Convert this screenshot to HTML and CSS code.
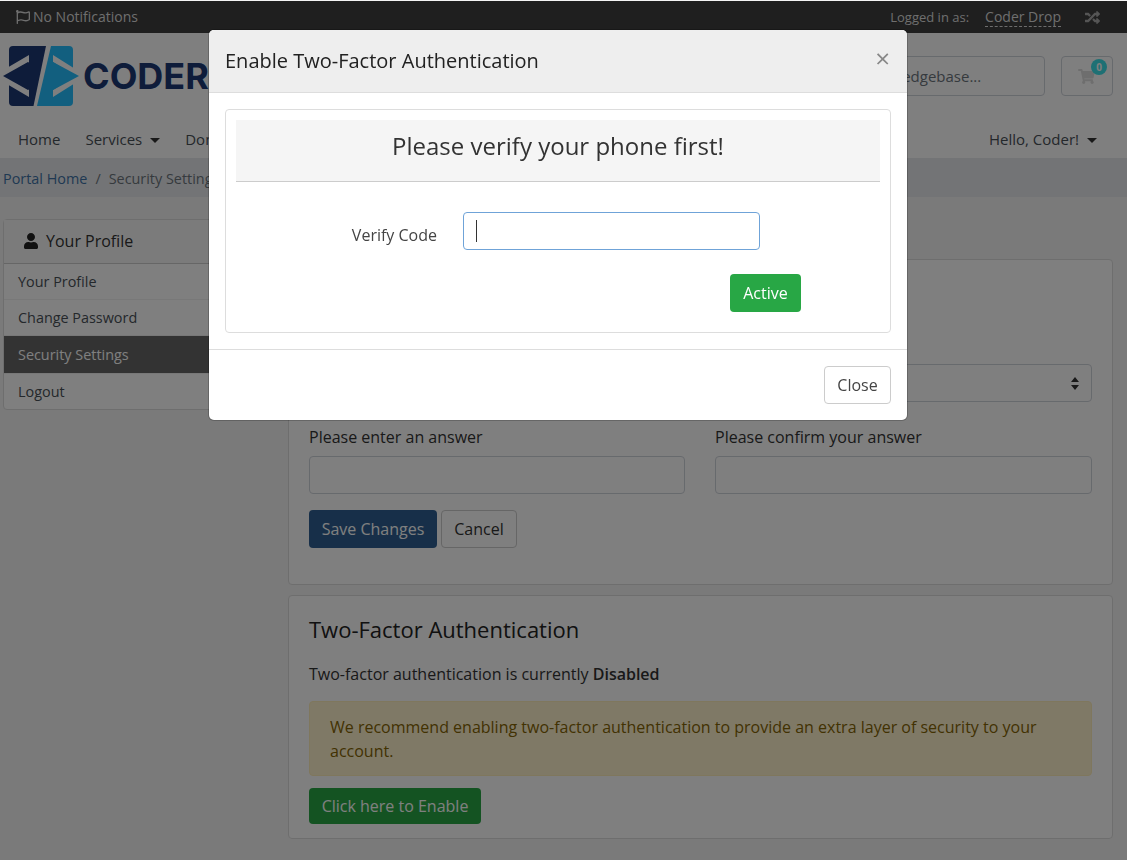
FILE: index.html
```html
<!DOCTYPE html>
<html>
  <head>
    <meta charset="UTF-8" />
    <title>Security Settings</title>
    <link rel="stylesheet" href="styles.css">
  </head>

  <body>
    <div class="top-bar">
      <div class="notifications">
        <svg class="flag-icon" viewBox="0 0 512 512"><path d="M336.174 80c-49.132 0-93.305-32-161.913-32-31.301 0-58.303 6.482-80.721 15.168a48.04 48.04 0 0 0 2.142-20.727C93.067 19.575 74.167 1.594 51.201.104 23.242-1.71 0 20.431 0 48c0 17.764 9.657 33.262 24 41.562V496c0 8.837 7.163 16 16 16h16c8.837 0 16-7.163 16-16v-83.443C109.869 395.28 143.259 384 199.826 384c49.132 0 93.305 32 161.913 32 58.479 0 101.972-22.617 128.548-39.981C503.846 367.161 512 352.051 512 335.855V95.937c0-34.459-35.264-57.768-66.904-44.117C409.193 67.309 371.641 80 336.174 80zM464 336c-21.783 15.412-60.824 32-102.261 32-59.945 0-102.002-32-161.913-32-43.361 0-96.379 9.403-127.826 24V128c21.784-15.412 60.824-32 102.261-32 59.945 0 102.002 32 161.913 32 43.271 0 96.32-17.366 127.826-32v240z"/></svg>
        No Notifications
      </div>
      <div class="account">
        <span class="logged-in">Logged in as:</span>
        <span class="account-name">Coder Drop</span>
        <svg class="shuffle-icon" viewBox="0 0 512 512"><path d="M504.971 359.029c9.373 9.373 9.373 24.569 0 33.941l-80 79.984c-15.01 15.01-40.971 4.49-40.971-16.971V416h-58.785a12.004 12.004 0 0 1-8.773-3.812l-70.556-75.596 53.333-57.143L352 336h32v-39.981c0-21.438 25.943-31.998 40.971-16.971l80 79.981zM12 176h84l52.781 56.551 53.333-57.143-70.556-75.596A11.999 11.999 0 0 0 122.785 96H12c-6.627 0-12 5.373-12 12v56c0 6.627 5.373 12 12 12zm372 0v39.984c0 21.46 25.961 31.98 40.971 16.971l80-79.984c9.373-9.373 9.373-24.569 0-33.941l-80-79.981C409.943 24.021 384 34.582 384 56.019V96h-58.785a12.004 12.004 0 0 0-8.773 3.812L96 336H12c-6.627 0-12 5.373-12 12v56c0 6.627 5.373 12 12 12h110.785c3.326 0 6.503-1.381 8.773-3.812L352 176h32z"/></svg>
      </div>
    </div>

    <div class="site-header">
      <div class="logo">
        <svg class="logo-mark" viewBox="0 0 80 62">
          <path fill="#1d3874" d="M13 1h33L33.500 61H13a4 4 0 0 1-4-4V5a4 4 0 0 1 4-4z" />
          <path fill="#fff" d="M29 10L0 27v8l29 17v-7L5 31l24-14z" />
          <path fill="#1d3874" d="M3 31l25-14v28z" />
          <path fill="#24bfff" d="M51 1h18a4 4 0 0 1 4 4v52a4 4 0 0 1-4 4H37z" />
          <path fill="#fff" d="M53 10l27 17v8L53 52v-7l22-14-22-14z" />
          <path fill="#24bfff" d="M79 31L53 17v28z" />
        </svg>
        <span class="logo-text">CODER</span>
      </div>
      <div class="header-tools">
        <input class="search-input" type="text" placeholder="Search our knowledgebase..." />
        <div class="cart-btn">
          <svg class="cart-icon" viewBox="0 0 576 512"><path d="M528.12 301.319l47.273-208C578.806 78.301 567.391 64 551.99 64H159.208l-9.166-44.81C147.758 8.021 137.93 0 126.529 0H24C10.745 0 0 10.745 0 24v16c0 13.255 10.745 24 24 24h69.883l70.248 343.435C147.325 417.1 136 435.222 136 456c0 30.928 25.072 56 56 56s56-25.072 56-56c0-15.674-6.447-29.835-16.824-40h209.647C430.447 426.165 424 440.326 424 456c0 30.928 25.072 56 56 56s56-25.072 56-56c0-22.172-12.888-41.332-31.579-50.405l5.517-24.276c3.413-15.018-8.002-29.319-23.403-29.319H218.117l-6.545-32h293.145c11.206 0 20.92-7.754 23.403-18.681z"/></svg>
          <span class="cart-badge">0</span>
        </div>
      </div>
    </div>

    <div class="main-nav">
      <div class="nav-left">
        <a class="nav-link">Home</a>
        <a class="nav-link has-caret">Services</a>
        <a class="nav-link has-caret">Domains</a>
      </div>
      <a class="nav-link has-caret">Hello, Coder!</a>
    </div>

    <div class="breadcrumb">
      <a class="crumb-link">Portal Home</a>
      <span class="crumb-sep">/</span>
      <span class="crumb-current">Security Settings</span>
    </div>

    <div class="page-body">
      <div class="side-card">
        <div class="side-title">
          <svg class="user-icon" viewBox="0 0 448 512"><path d="M224 256c70.700 0 128-57.300 128-128S294.700 0 224 0 96 57.300 96 128s57.300 128 128 128zm89.600 32h-16.700c-22.200 10.200-46.900 16-72.900 16s-50.600-5.800-72.900-16h-16.700C60.200 288 0 348.200 0 422.400V464c0 26.500 21.500 48 48 48h352c26.500 0 48-21.500 48-48v-41.600c0-74.200-60.200-134.400-134.400-134.400z"/></svg>
          Your Profile
        </div>
        <a class="side-item">Your Profile</a>
        <a class="side-item">Change Password</a>
        <a class="side-item active">Security Settings</a>
        <a class="side-item">Logout</a>
      </div>

      <div class="content">
        <div class="card question-card">
          <h3 class="card-title">Security Question</h3>
          <div class="form-row select-row">
            <div class="field">
              <label class="field-label">Current answer</label>
              <input class="field-input" type="text" />
            </div>
            <div class="field">
              <label class="field-label">Please choose a question</label>
              <div class="select-wrap">
                <div class="field-input"></div>
                <svg class="select-arrows" viewBox="0 0 8 13"><path d="M4 0l4 5H0zM4 13L0 8h8z"/></svg>
              </div>
            </div>
          </div>
          <div class="form-row">
            <div class="field">
              <label class="field-label">Please enter an answer</label>
              <input class="field-input" type="text" />
            </div>
            <div class="field">
              <label class="field-label">Please confirm your answer</label>
              <input class="field-input" type="text" />
            </div>
          </div>
          <div class="form-actions">
            <button class="btn btn-primary">Save Changes</button>
            <button class="btn btn-outline">Cancel</button>
          </div>
        </div>

        <div class="card twofa-card">
          <h3 class="card-title">Two-Factor Authentication</h3>
          <p class="twofa-status">Two-factor authentication is currently <strong>Disabled</strong></p>
          <div class="alert-warning">We recommend enabling two-factor authentication to provide an extra layer of security to your account.</div>
          <button class="btn btn-success btn-enable">Click here to Enable</button>
        </div>
      </div>
    </div>

    <div class="modal-backdrop">
      <div class="modal">
        <div class="modal-header">
          <span class="modal-title">Enable Two-Factor Authentication</span>
          <span class="modal-close">×</span>
        </div>
        <div class="modal-body">
          <div class="verify-box">
            <div class="verify-heading">Please verify your phone first!</div>
            <div class="verify-row">
              <label class="verify-label">Verify Code</label>
              <div class="verify-field">
                <input class="verify-input" type="text" />
                <span class="text-caret"></span>
              </div>
            </div>
            <div class="verify-actions">
              <button class="btn btn-success btn-active">Active</button>
            </div>
          </div>
        </div>
        <div class="modal-footer">
          <button class="btn btn-close">Close</button>
        </div>
      </div>
    </div>
  </body>
</html>
```

FILE: styles.css
```css
* {
  box-sizing: border-box;
}

body {
  font-family: "Open Sans", sans-serif;
  font-size: 16px;
  line-height: 24px;
  color: #333;
  margin: 0;
  padding-top: 1px;
  background: #f4f4f4;
}

/* Top bar */
.top-bar {
  display: flex;
  justify-content: space-between;
  align-items: center;
  height: 32px;
  padding: 0 27px 0 16px;
  background: #3e3e3e;
  color: #ddd;
  font-size: 14px;
}

.notifications {
  display: flex;
  align-items: center;
  gap: 3px;
}

.flag-icon {
  width: 14px;
  height: 14px;
  fill: #ddd;
}

.account {
  display: flex;
  align-items: center;
}

.logged-in {
  font-size: 13px;
}

.account-name {
  margin-left: 16px;
  line-height: 19px;
  border-bottom: 1px dashed #ddd;
}

.shuffle-icon {
  width: 15px;
  height: 15px;
  margin-left: 24px;
  fill: #aaa;
}

/* Header */
.site-header {
  display: flex;
  justify-content: space-between;
  height: 90px;
  padding: 12px 14px 0 0;
  background: #fff;
}

.logo {
  display: flex;
  align-items: center;
  height: 62px;
}

.logo-mark {
  width: 80px;
  height: 62px;
}

.logo-text {
  margin-left: 3px;
  font-family: "Inter", sans-serif;
  font-size: 36px;
  font-weight: 700;
  color: #1d3874;
  white-space: nowrap;
}

.header-tools {
  display: flex;
  gap: 16px;
  height: 40px;
  margin-top: 11px;
}

.search-input {
  width: 277px;
  padding: 0 12px;
  font-family: inherit;
  font-size: 15px;
  background: #fff;
  border: 1px solid #ced4da;
  border-radius: 4px;
}

.search-input::placeholder {
  color: #6c757d;
}

.cart-btn {
  position: relative;
  display: flex;
  align-items: center;
  justify-content: center;
  width: 52px;
  border: 1px solid #ced4da;
  border-radius: 4px;
}

.cart-icon {
  width: 17px;
  height: 15px;
  margin-top: 1px;
  margin-left: -1px;
  fill: #ddd;
}

.cart-badge {
  position: absolute;
  top: 2px;
  right: 5px;
  width: 16px;
  height: 16px;
  border-radius: 50%;
  background: #3ce0e8;
  color: #fff;
  font-size: 10px;
  font-weight: 700;
  line-height: 16px;
  text-align: center;
}

/* Nav */
.main-nav {
  display: flex;
  justify-content: space-between;
  align-items: center;
  height: 35px;
  padding: 0 30px 3px 18px;
  background: #fff;
  font-size: 15px;
}

.nav-left {
  display: flex;
  gap: 25px;
}

.nav-link {
  color: #495057;
}

.has-caret::after {
  content: "";
  display: inline-block;
  margin-left: 8px;
  vertical-align: 2px;
  border-top: 5px solid #333;
  border-left: 5px solid transparent;
  border-right: 5px solid transparent;
}

.breadcrumb {
  display: flex;
  gap: 8px;
  height: 39px;
  padding: 9px 3px 0;
  background: #e7e9ec;
  font-size: 14.4px;
  line-height: 24px;
  color: #6c757d;
}

.crumb-link {
  color: #3f72a6;
}

/* Page body */
.page-body {
  display: grid;
  grid-template-columns: 270px 825px;
  gap: 15px;
  padding: 22px 0 0 3px;
}

.side-card {
  align-self: start;
  background: #fff;
  border: 1px solid #ddd;
  border-radius: 4px;
  font-size: 14.4px;
}

.side-title {
  display: flex;
  align-items: center;
  gap: 8px;
  height: 44px;
  padding: 0 0 2px 20px;
  background: #f7f7f7;
  border-bottom: 1px solid #ccc;
  font-size: 16px;
  color: #333;
}

.user-icon {
  width: 14px;
  height: 16px;
  fill: #222;
}

.side-item {
  display: block;
  height: 36px;
  padding: 6px 14px;
  border-bottom: 1px solid #f0f0f0;
  color: #495057;
}

.side-item.active {
  height: 38px;
  padding-top: 7px;
  background: #666;
  color: #fff;
}

.side-item:last-child {
  height: 35px;
  border-bottom: 0;
}

.content {
  display: flex;
  flex-direction: column;
  gap: 10px;
  margin-top: 40px;
}

.card {
  background: #fff;
  border: 1px solid #ddd;
  border-radius: 4px;
  padding: 20px;
}

.card-title {
  margin: 0;
  font-size: 22px;
  font-weight: 400;
  line-height: 26px;
  color: #222;
}

.question-card {
  height: 326px;
}

.form-row {
  display: grid;
  grid-template-columns: 376px 377px;
  gap: 30px;
  margin-bottom: 16px;
}

.select-row {
  margin-top: 27px;
  margin-bottom: 23px;
}

.field-label {
  display: block;
  margin-bottom: 7px;
  line-height: 24px;
  color: #333;
}

.field-input {
  display: block;
  width: 100%;
  height: 38px;
  background: #fff;
  border: 1px solid #ced4da;
  border-radius: 4px;
}

.select-wrap {
  position: relative;
}

.select-arrows {
  position: absolute;
  top: 13px;
  right: 13px;
  width: 8px;
  height: 13px;
  fill: #333;
}

.form-actions {
  display: flex;
  gap: 4px;
}

.btn {
  height: 38px;
  padding: 0 12px;
  font-family: inherit;
  font-size: 16px;
  border: 1px solid transparent;
  border-radius: 4px;
}

.btn-primary {
  width: 128px;
  padding: 0;
  background: #2e5f92;
  color: #fff;
}

.btn-outline {
  width: 76px;
  padding: 0;
  background: #fff;
  border-color: #ccc;
  color: #333;
}

.btn-success {
  background: #28a745;
  color: #fff;
}

.twofa-card {
  height: 244px;
}

.twofa-status {
  margin: 20px 0 15px;
  color: #333;
}

.twofa-status strong {
  font-weight: 600;
}

.alert-warning {
  height: 75px;
  padding: 13px 20px;
  background: #fff3cd;
  border: 1px solid #ffeeba;
  border-radius: 4px;
  color: #856404;
}

.btn-enable {
  width: 172px;
  height: 36px;
  margin-top: 12px;
  padding: 0;
}

/* Modal */
.modal-backdrop {
  position: fixed;
  top: 1px;
  left: 0;
  right: 0;
  bottom: 0;
  padding: 29px 0 0 209px;
  background: rgba(0, 0, 0, 0.5);
}

.modal {
  width: 698px;
  height: 390px;
  background: #fff;
  border-radius: 5px;
  box-shadow: 0 0 0 1px rgba(0, 0, 0, 0.2);
  overflow: hidden;
}

.modal-header {
  display: flex;
  justify-content: space-between;
  align-items: center;
  height: 63px;
  padding: 0 17px 0 16px;
  background: #eee;
  border-bottom: 1px solid #ddd;
}

.modal-title {
  font-size: 20px;
  color: #222;
}

.modal-close {
  font-size: 26px;
  font-weight: 400;
  color: #888;
  margin-top: -6px;
}

.modal-body {
  height: 224px;
  margin: 16px 16px 16px;
}

.verify-box {
  height: 224px;
  padding: 10px;
  border: 1px solid #ddd;
  border-radius: 4px;
}

.verify-heading {
  height: 62px;
  background: #f5f5f5;
  border-bottom: 1px solid #ccc;
  font-size: 24px;
  line-height: 52px;
  text-align: center;
  color: #333;
}

.verify-row {
  display: flex;
  align-items: center;
  margin-top: 30px;
}

.verify-label {
  width: 201px;
  padding-top: 8px;
  font-size: 16px;
  text-align: right;
  color: #444;
}

.verify-field {
  position: relative;
  margin-left: 26px;
}

.verify-input {
  display: block;
  width: 297px;
  height: 38px;
  background: #fff;
  border: 1px solid #6fa3d8;
  border-radius: 4px;
}

.text-caret {
  position: absolute;
  top: 8px;
  left: 13px;
  width: 1px;
  height: 22px;
  background: #333;
}

.verify-actions {
  margin: 24px 0 0 494px;
}

.btn-active {
  width: 71px;
  padding: 0;
}

.modal-footer {
  display: flex;
  justify-content: flex-end;
  height: 71px;
  padding: 16px;
  border-top: 1px solid #ddd;
}

.btn-close {
  width: 67px;
  padding: 0;
  background: #fff;
  border-color: #ccc;
  color: #444;
}
```
